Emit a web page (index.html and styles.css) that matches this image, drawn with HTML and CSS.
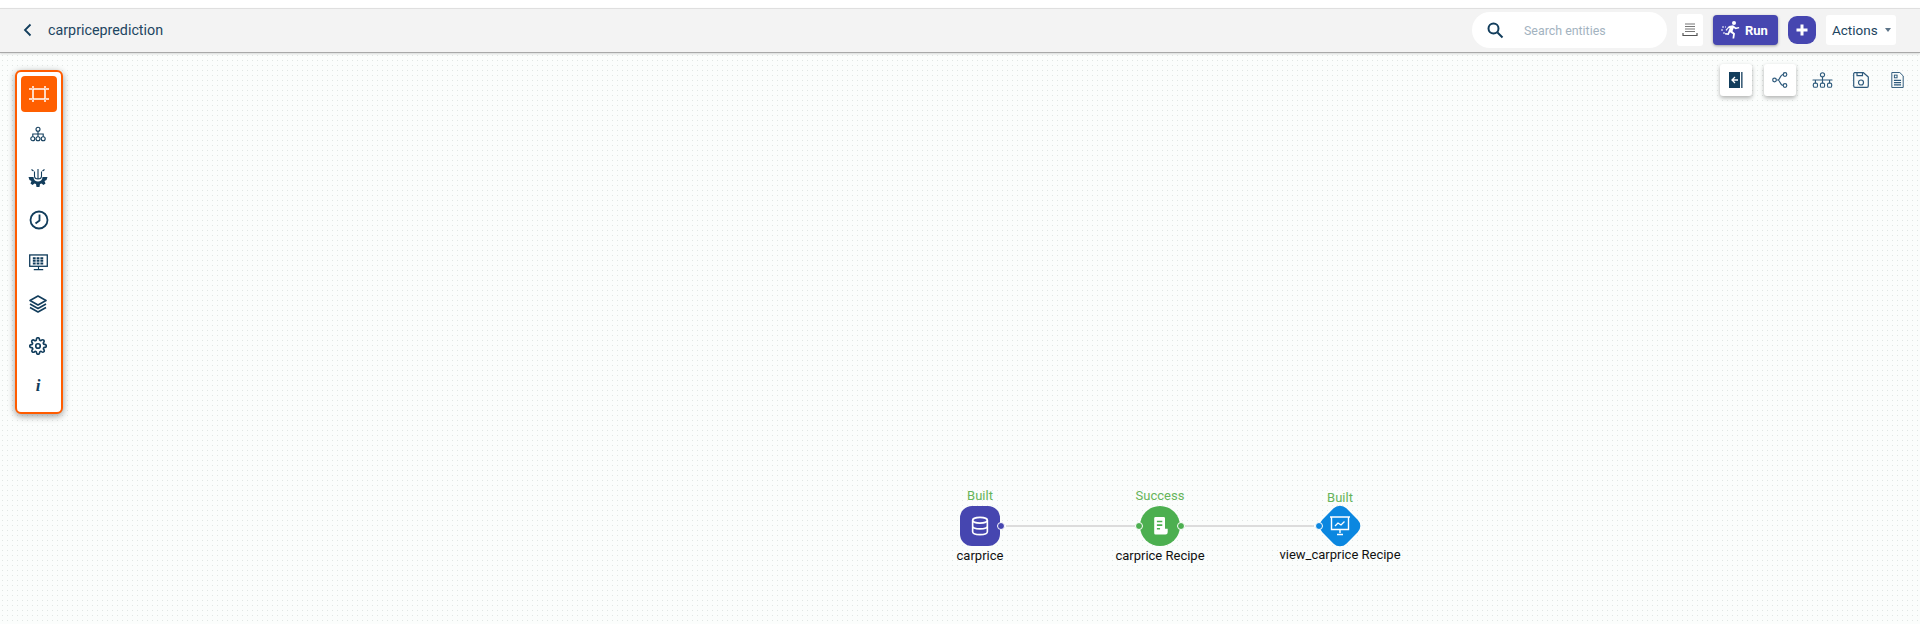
FILE: index.html
```html
<!DOCTYPE html>
<html lang="en">
<head>
    <meta charset="UTF-8">
    <title>carpriceprediction</title>
    <link rel="stylesheet" href="styles.css">
</head>
<body>
    <header class="topbar">
        <div class="topbar-left">
            <svg class="back" width="12" height="14" viewBox="0 0 12 14"><path d="M8.5 1.500 3 7l5.500 5.500" fill="none" stroke="#123d5c" stroke-width="1.800"/></svg>
            <span class="project-name">carpriceprediction</span>
        </div>
        <div class="topbar-right">
            <div class="search">
                <svg width="18" height="18" viewBox="0 0 18 18"><circle cx="7.500" cy="7.500" r="5" fill="none" stroke="#123d5c" stroke-width="2"/><path d="m11.500 11.500 5 5" stroke="#123d5c" stroke-width="2"/></svg>
                <span class="search-text">Search entities</span>
            </div>
            <button class="logs-btn">
                <svg width="16" height="14" viewBox="0 0 16 14"><path d="M3 1h10M3 3.500h10M3 6h10M3 8.500h10" stroke="#777" stroke-width="1.200"/><path d="M1 10v2.500h14V10" fill="none" stroke="#555" stroke-width="1.200"/></svg>
            </button>
            <button class="run-btn">
                <svg width="22" height="20" viewBox="0 0 22 20" fill="#fff"><circle cx="14" cy="3" r="2"/><path d="M9 6l4-.8 3 2.300 3-.5.300 1.300-3.800.9-1.800-1.200-1.200 3.300 2.500 2.200-.8 5h-1.700l.5-4.200-3-2-1.300 2.800-3.700-.5.200-1.500 2.500.2 2-5.300-1.700.4-1.200 2.300-1.300-.6z"/><path d="M2 7h4M1 10h3M3 13h3" stroke="#fff" stroke-width="1" stroke-dasharray="2 1"/></svg>
                <span>Run</span>
            </button>
            <button class="add-btn">
                <svg width="14" height="14" viewBox="0 0 14 14"><path d="M7 1.500v11M1.500 7h11" stroke="#fff" stroke-width="3"/></svg>
            </button>
            <div class="actions">Actions <span class="caret"></span></div>
        </div>
    </header>

    <main class="canvas">
        <nav class="sidebar">
            <a class="side-item active">
                <svg width="20" height="16" viewBox="0 0 20 16" fill="none" stroke="#fff" stroke-width="1.500"><rect x="4" y="3" width="12" height="10"/><path d="M4 0v2M16 0v2M4 14v2M16 14v2M0 3h3M0 13h3M17 3h3M17 13h3"/></svg>
            </a>
            <a class="side-item up">
                <svg width="16" height="16" viewBox="0 0 20 20" fill="none" stroke="#123d5c" stroke-width="1.400"><circle cx="10" cy="4" r="2.500"/><circle cx="3.500" cy="16" r="2.500"/><circle cx="10" cy="16" r="2.500"/><circle cx="16.500" cy="16" r="2.500"/><path d="M10 6.500v7M3.500 13.500V10h13v3.500"/></svg>
            </a>
            <a class="side-item">
                <svg width="20" height="20" viewBox="0 0 19 20"><path d="M0 9H5C5 15 14 15 14 9H19L18 12 16 13 17 15.500 15 17 13 15.500 11.500 16 11 19H8L7.500 16 6 15.500 4 17 2 15.500 3 13 1 12Z" fill="#123d5c"/><path d="M9.500 1V11M6 3.500V8c0 2 1.500 3 3.500 3s3.500-1 3.500-3V3.500M3 1.500 5 3M16 1.500 14 3" fill="none" stroke="#123d5c" stroke-width="1.100"/></svg>
            </a>
            <a class="side-item clock">
                <svg width="20" height="20" viewBox="0 0 20 20" fill="none" stroke="#123d5c" stroke-width="1.800"><circle cx="10" cy="10" r="8.500"/><path d="M10.500 4.500V10.500L6.500 13.500"/></svg>
            </a>
            <a class="side-item">
                <svg width="19" height="17" viewBox="0 0 20 18" fill="none" stroke="#123d5c"><rect x=".7" y="1" width="18.600" height="12" stroke-width="1.400"/><path d="M4 4.500h12M4 7.200h12M4 10h12" stroke-width="2" stroke-dasharray="3 1"/><path d="M10 13v3M5 16.500h10" stroke-width="1.200"/></svg>
            </a>
            <a class="side-item">
                <svg width="18" height="18" viewBox="0 0 18 18" fill="none" stroke="#123d5c" stroke-width="1.600" stroke-linejoin="round"><path d="M9 1 17 5.500 9 10 1 5.500z"/><path d="m1 9 8 4.500L17 9M1 12.500 9 17l8-4.500"/></svg>
            </a>
            <a class="side-item">
                <svg width="18" height="18" viewBox="0 0 24 24" fill="none" stroke="#123d5c" stroke-width="2.200" stroke-linejoin="round"><circle cx="12" cy="12" r="3"/><path d="M19.400 15a1.650 1.650 0 0 0 .33 1.820l.06.06a2 2 0 1 1-2.830 2.830l-.06-.06a1.650 1.650 0 0 0-2.800 1.170V21a2 2 0 0 1-4 0v-.09a1.650 1.650 0 0 0-2.800-1.170l-.06.06a2 2 0 1 1-2.830-2.830l.06-.06a1.650 1.650 0 0 0-1.170-2.800H3a2 2 0 0 1 0-4h.09a1.650 1.650 0 0 0 1.170-2.800l-.06-.06a2 2 0 1 1 2.830-2.830l.06.06a1.650 1.650 0 0 0 2.800-1.170V3a2 2 0 0 1 4 0v.09a1.650 1.650 0 0 0 2.800 1.170l.06-.06a2 2 0 1 1 2.830 2.830l-.06.06a1.650 1.650 0 0 0 1.170 2.800H21a2 2 0 0 1 0 4h-.09a1.650 1.650 0 0 0-1.510 1z"/></svg>
            </a>
            <a class="side-item info">i</a>
        </nav>

        <div class="view-tools">
            <button class="tool raised">
                <svg width="14" height="16" viewBox="0 0 14 16"><rect x="0" y="0" width="11" height="16" fill="#123d5c"/><rect x="12.200" y="0" width="1.300" height="16" fill="#123d5c"/><path d="M9 8H3.500M6 5 3 8l3 3" fill="none" stroke="#fff" stroke-width="1.300"/></svg>
            </button>
            <button class="tool raised">
                <svg width="16" height="16" viewBox="0 0 16 16" fill="none" stroke="#2e5a7c" stroke-width="1.200"><circle cx="2.500" cy="8" r="1.800"/><circle cx="13" cy="2.500" r="1.800"/><circle cx="13" cy="13.500" r="1.800"/><path d="M4.300 8H6c2 0 2-5.500 5.200-5.500M6 8c2 0 2 5.500 5.200 5.500"/></svg>
            </button>
            <button class="tool tool-tree">
                <svg width="21" height="17" viewBox="0 0 22 18" fill="none" stroke="#2e5a7c" stroke-width="1.200"><circle cx="11" cy="3" r="2.200"/><rect x="1.300" y="11.800" width="4.400" height="4.400" rx="1.500"/><rect x="8.800" y="11.800" width="4.400" height="4.400" rx="1.500"/><rect x="16.300" y="11.800" width="4.400" height="4.400" rx="1.500"/><path d="M11 5.200v6.600M3.500 11.800V8.500h15v3.300M.5 8.500h21"/></svg>
            </button>
            <button class="tool tool-save">
                <svg width="16" height="16" viewBox="0 0 16 16" fill="none" stroke="#2e5a7c" stroke-width="1.200" stroke-linejoin="round"><path d="M1.500.7h9l4.800 4.300v9a1.300 1.300 0 0 1-1.300 1.300H2A1.300 1.300 0 0 1 .7 14V1.500z"/><circle cx="8" cy="10.500" r="2.500"/><path d="M4 .7v3h5.500V.7"/></svg>
            </button>
            <button class="tool tool-doc">
                <svg width="13" height="16" viewBox="0 0 14 18" fill="none" stroke="#2e5a7c" stroke-width="1.100"><path d="M.6.600h9l3.800 3.800v13H.6z"/><rect x="3.500" y="3.500" width="3" height="3"/><path d="M3 9.500h8M3 12h8M3 14.500h8" stroke-width="1.300"/></svg>
            </button>
        </div>

        <div class="flow">
            <svg class="edges" width="380" height="4"><path d="M0 2h129M179 2h129" stroke="#dcdcdc" stroke-width="2"/></svg>

            <div class="node node-dataset">
                <span class="node-status">Built</span>
                <div class="node-shape">
                    <svg width="18" height="20" viewBox="0 0 22 24" fill="none" stroke="#fff" stroke-width="2"><ellipse cx="11" cy="5" rx="9" ry="3.500"/><path d="M2 5v14c0 2 4 3.500 9 3.500s9-1.500 9-3.500V5M2 12c0 2 4 3.500 9 3.500s9-1.500 9-3.500"/></svg>
                    <span class="port port-right"></span>
                </div>
                <span class="node-name">carprice</span>
            </div>

            <div class="node node-recipe">
                <span class="node-status">Success</span>
                <div class="node-shape">
                    <svg width="17" height="18" viewBox="0 0 18 20"><path d="M2 1.500A1.500 1.500 0 0 1 3.500 0h9A1.500 1.500 0 0 1 14 1.500V13h3v4a2.500 2.500 0 0 1-2.500 2.500h-11A1.500 1.500 0 0 1 2 18z" fill="#fff"/><path d="M5 5h6M5 9h6M5 13h3.500" stroke="#4caf50" stroke-width="1.800"/></svg>
                    <span class="port port-left"></span>
                    <span class="port port-right"></span>
                </div>
                <span class="node-name">carprice Recipe</span>
            </div>

            <div class="node node-chart">
                <span class="node-status">Built</span>
                <div class="node-shape">
                    <span class="diamond"></span>
                    <svg width="20" height="20" viewBox="0 0 20 20" fill="none" stroke="#fff" stroke-width="1.400"><path d="M0 1h20M1.500 1v12.500h17V1M10 13.500V17M7 18.500h6"/><path d="m5 10 3-3 3 2 3.500-3.500" stroke-width="1.300"/></svg>
                    <span class="port port-left"></span>
                </div>
                <span class="node-name">view_carprice Recipe</span>
            </div>
        </div>
    </main>
</body>
</html>
```

FILE: styles.css
```css
* {
    box-sizing: border-box;
}
body {
    margin: 0;
    padding-top: 8px;
    height: 624px;
    overflow: hidden;
    background: #fff;
    font-family: Roboto, sans-serif;
    color: #123d5c;
}
button {
    border: none;
    padding: 0;
    background: none;
    font-family: inherit;
}

/* top bar */
.topbar {
    display: flex;
    justify-content: space-between;
    align-items: center;
    height: 45px;
    padding: 0 24px 1px 22px;
    background: #f3f3f3;
    border-top: 1px solid #dfdfdf;
    border-bottom: 1px solid #a8a8a8;
    box-shadow: 0 1px 2px rgba(0, 0, 0, 0.15);
    position: relative;
    z-index: 2;
}
.topbar-left {
    display: flex;
    align-items: center;
    gap: 14px;
}
.project-name {
    font-size: 14.3px;
    color: #1d4561;
}
.topbar-right {
    display: flex;
    align-items: center;
}
.search {
    display: flex;
    align-items: center;
    width: 195px;
    height: 36px;
    padding-left: 14px;
    margin-right: 10px;
    gap: 20px;
    background: #fff;
    border-radius: 18px;
}
.search-text {
    font-size: 12.4px;
    color: #a3b3bf;
}
.logs-btn {
    display: flex;
    align-items: center;
    justify-content: center;
    width: 26px;
    height: 32px;
    margin-right: 10px;
    background: #fff;
    border-radius: 3px;
}
.run-btn {
    display: flex;
    align-items: center;
    gap: 3px;
    width: 65px;
    height: 30px;
    margin-right: 10px;
    padding-left: 7px;
    background: #4646b0;
    border-radius: 4px;
    color: #fff;
    font-size: 13px;
    font-weight: 700;
    box-shadow: 0 1px 3px rgba(0, 0, 0, 0.35);
}
.add-btn {
    display: flex;
    align-items: center;
    justify-content: center;
    width: 28px;
    height: 28px;
    margin-right: 10px;
    background: #4646b0;
    border-radius: 9px;
}
.actions {
    display: flex;
    align-items: center;
    width: 70px;
    height: 30px;
    padding-left: 6px;
    background: #fff;
    border-radius: 3px;
    font-size: 13.5px;
    color: #1d4561;
}
.caret {
    margin-left: 7px;
    border-left: 3.5px solid transparent;
    border-right: 3.5px solid transparent;
    border-top: 4px solid #5d7488;
}

/* canvas */
.canvas {
    position: relative;
    height: 571px;
    background-color: #fbfdfc;
    background-image: radial-gradient(circle, #e1e7e4 0.6px, transparent 0.8px);
    background-size: 5px 5px;
}
.sidebar {
    position: absolute;
    left: 15px;
    top: 17px;
    display: flex;
    flex-direction: column;
    align-items: center;
    width: 48px;
    height: 344px;
    padding-top: 4px;
    gap: 6px;
    background: #fff;
    border: 2px solid #ff5c00;
    border-radius: 6px;
    box-shadow: 0 2px 7px rgba(0, 0, 0, 0.4);
}
.side-item {
    display: flex;
    align-items: center;
    justify-content: center;
    width: 36px;
    height: 36px;
    flex: none;
    padding-right: 2px;
}
.side-item.active,
.side-item.clock {
    padding-right: 0;
}
.side-item.up {
    padding-bottom: 4px;
}
.side-item.active {
    background: #ff5f00;
    border-radius: 4px;
}
.info {
    font-family: "Liberation Serif", serif;
    font-style: italic;
    font-weight: 700;
    font-size: 17px;
    color: #123d5c;
    padding-bottom: 4px;
}
.view-tools {
    position: absolute;
    top: 11px;
    right: 12px;
    display: flex;
    align-items: center;
    gap: 12px;
}
.tool {
    display: flex;
    align-items: center;
    justify-content: center;
    width: 32px;
    height: 32px;
    border-radius: 3px;
}
.tool-tree {
    width: 28px;
}
.tool-save {
    width: 26px;
}
.tool-doc {
    width: 22px;
}
.tool.raised {
    background: #fff;
    box-shadow: 0 2px 4px rgba(0, 0, 0, 0.3);
}

/* flow nodes */
.flow {
    position: absolute;
    left: 0;
    top: 0;
    width: 100%;
    height: 100%;
}
.edges {
    position: absolute;
    left: 1006px;
    top: 471px;
}
.node {
    position: absolute;
    display: flex;
    flex-direction: column;
    align-items: center;
    width: 140px;
    font-size: 13px;
    color: #111;
}
.node-dataset {
    left: 910px;
    top: 436px;
}
.node-recipe {
    left: 1090px;
    top: 436px;
}
.node-chart {
    left: 1270px;
    top: 438px;
}
.node-status {
    height: 14px;
    line-height: 14px;
    margin-bottom: 3px;
    color: #66b45a;
}
.node-chart .node-status {
    margin-bottom: 1px;
}
.node-name {
    margin-top: 3px;
    line-height: 14px;
    white-space: nowrap;
}
.node-chart .node-name {
    margin-top: 2px;
}
.node-shape {
    position: relative;
    display: flex;
    align-items: center;
    justify-content: center;
    width: 40px;
    height: 40px;
}
.node-dataset .node-shape {
    background: #4646b0;
    border-radius: 12px;
}
.node-recipe .node-shape {
    background: #4caf50;
    border-radius: 50%;
}
.node-chart .node-shape svg {
    position: relative;
}
.diamond {
    position: absolute;
    left: 3px;
    top: 3px;
    width: 34px;
    height: 34px;
    background: #0b87e0;
    border-radius: 9px;
    transform: rotate(45deg);
}
.port {
    position: absolute;
    top: 16px;
    width: 8px;
    height: 8px;
    border-radius: 50%;
    border: 1px solid #fff;
}
.port-left {
    left: -5px;
}
.port-right {
    right: -5px;
}
.node-dataset .port {
    background: #4646b0;
}
.node-recipe .port {
    background: #4caf50;
}
.node-chart .port {
    background: #0b87e0;
}
```
